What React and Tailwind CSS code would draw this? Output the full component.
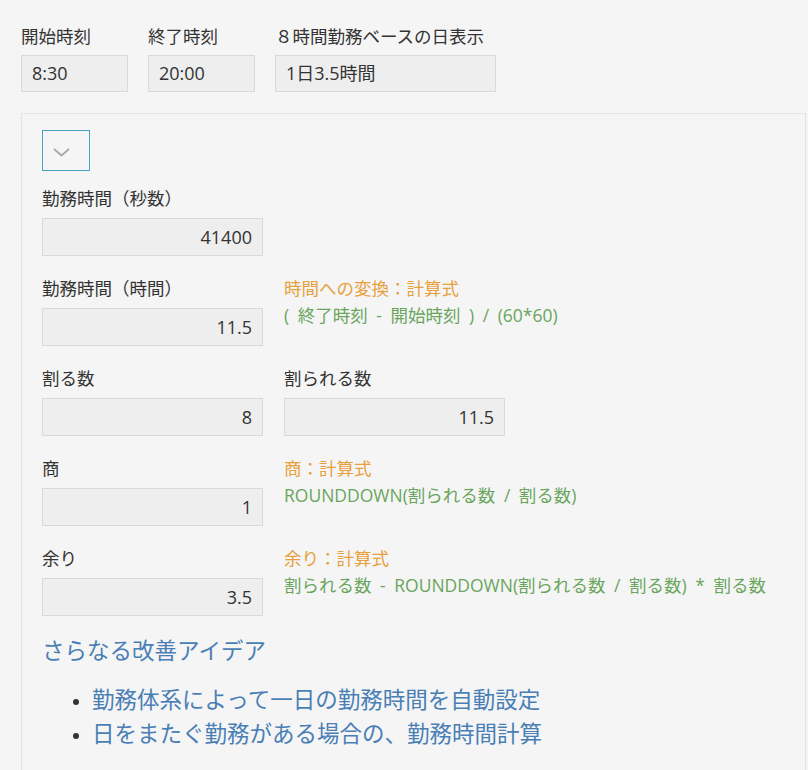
const font = { fontFamily: '"Open Sans", "Noto Sans CJK JP", sans-serif' }

function Box({ value, width = 'w-[221px]', right = true, h = 'h-[38px]' }) {
  return (
    <div
      className={`${width} ${h} flex items-center border border-[#d9d9d9] bg-[#eeeeee] px-[10px] text-[18px] text-[#333] ${right ? 'justify-end' : 'justify-start'}`}
    >
      {value}
    </div>
  )
}

function Field({ label, value }) {
  return (
    <div className="w-[221px]">
      <div className="h-[20px] leading-[20px] text-[17.5px] text-[#333] mb-[10px] whitespace-nowrap">{label}</div>
      <Box value={value} />
    </div>
  )
}

function Formula({ title, expr }) {
  return (
    <div className="text-[17.5px] whitespace-nowrap [word-spacing:4px]">
      <div className="leading-[20px] text-[#e6a03c]">{title}</div>
      <div className="leading-[20px] mt-[7px] text-[#6aa55d]">{expr}</div>
    </div>
  )
}

function TopField({ label, value, width }) {
  return (
    <div className={width}>
      <div className="h-[20px] leading-[20px] text-[17.5px] text-[#333] mb-[9px] whitespace-nowrap">{label}</div>
      <Box value={value} width={width} right={false} h="h-[37px]" />
    </div>
  )
}

const rows = [
  {
    left: { label: '勤務時間（秒数）', value: '41400' },
  },
  {
    left: { label: '勤務時間（時間）', value: '11.5' },
    formula: { title: '時間への変換：計算式', expr: '( 終了時刻 - 開始時刻 ) / (60*60)' },
  },
  {
    left: { label: '割る数', value: '8' },
    right: { label: '割られる数', value: '11.5' },
  },
  {
    left: { label: '商', value: '1' },
    formula: { title: '商：計算式', expr: 'ROUNDDOWN(割られる数 / 割る数)' },
  },
  {
    left: { label: '余り', value: '3.5' },
    formula: { title: '余り：計算式', expr: '割られる数 - ROUNDDOWN(割られる数 / 割る数) * 割る数' },
  },
]

export default function App() {
  return (
    <div className="min-h-[770px] w-[808px] overflow-hidden bg-[#f5f5f5] pt-[26px] pl-[21px]" style={font}>
      {/* header fields */}
      <div className="flex gap-[20px]">
        <TopField label="開始時刻" value="8:30" width="w-[107px]" />
        <TopField label="終了時刻" value="20:00" width="w-[107px]" />
        <TopField label="８時間勤務ベースの日表示" value="1日3.5時間" width="w-[221px]" />
      </div>

      {/* group panel */}
      <div className="mt-[21px] w-[785px] border border-[#e3e3e3] pl-[20px] pt-[16px] pb-[40px]">
        <div className="flex h-[41px] w-[48px] items-center border border-[#4aa3c2] pl-[10px] pt-[3px]">
          <svg width="17" height="9" viewBox="0 0 17 9" fill="none">
            <polyline points="1,1 8.5,7.5 16,1" stroke="#a8a8a8" strokeWidth="1.8" />
          </svg>
        </div>

        <div className="mt-[17px] flex flex-col gap-[22px]">
          {rows.map((row, i) => (
            <div key={i} className="flex gap-[21px]">
              <Field label={row.left.label} value={row.left.value} />
              {row.right && <Field label={row.right.label} value={row.right.value} />}
              {row.formula && <Formula title={row.formula.title} expr={row.formula.expr} />}
            </div>
          ))}
        </div>

        <div className="mt-[20px] text-[22.5px] leading-[30px] text-[#4a7fb5]">さらなる改善アイデア</div>
        <ul className="mt-[17px] list-disc pl-[50px] text-[22.5px] leading-[34px] text-[#4a7fb5] marker:text-[#333] marker:text-[18px]">
          <li>勤務体系によって一日の勤務時間を自動設定</li>
          <li>日をまたぐ勤務がある場合の、勤務時間計算</li>
        </ul>
      </div>
    </div>
  )
}
